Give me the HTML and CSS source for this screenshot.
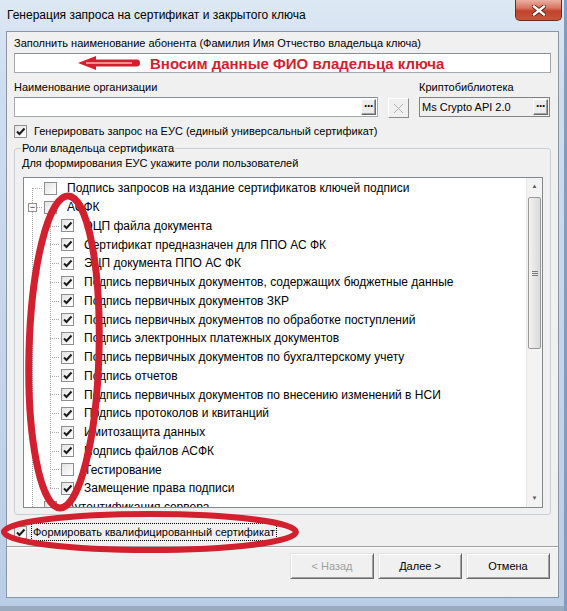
FILE: index.html
```html
<!DOCTYPE html>
<html lang="ru">
<head>
  <meta charset="UTF-8" />
  <title>Генерация запроса на сертификат и закрытого ключа</title>
  <link rel="stylesheet" href="styles.css">
</head>
<body>
  <div class="window">
    <div class="titlebar">
      <span class="title">Генерация запроса на сертификат и закрытого ключа</span>
      <div class="close">
        <svg width="14" height="11" viewBox="0 0 14 11">
          <path d="M2 1.5 L12 9.5 M12 1.5 L2 9.5" stroke="#5a1c12" stroke-width="4.2" stroke-linecap="square"/>
          <path d="M2 1.5 L12 9.5 M12 1.5 L2 9.5" stroke="#fff" stroke-width="2.4" stroke-linecap="square"/>
        </svg>
      </div>
    </div>

    <div class="client">
      <div class="label first">Заполнить наименование абонента (Фамилия Имя Отчество владельца ключа)</div>
      <div class="edit wide">
        <svg class="arrow" width="64" height="16" viewBox="0 0 64 16">
          <path d="M1 8 L19 1 L19 4.5 L60 4.5 Q63 4.5 63 8 Q63 11.5 60 11.5 L19 11.5 L19 15 Z" fill="#d3202e"/>
          <path d="M9 8 L55 8" stroke="#fff" stroke-width="1"/>
        </svg>
        <span class="note">Вносим данные ФИО владельца ключа</span>
      </div>

      <div class="org">
        <div class="label">Наименование организации</div>
        <div></div>
        <div class="label">Криптобиблиотека</div>
        <div class="edit">
          <span class="dots">···</span>
        </div>
        <div class="btn-x">
          <svg width="11" height="11" viewBox="0 0 11 11">
            <path d="M1 1 L10 10 M10 1 L1 10" stroke="#b4b4b4" stroke-width="1"/>
          </svg>
        </div>
        <div class="combo">
          <span>Ms Crypto API 2.0</span>
          <span class="dots">···</span>
        </div>
      </div>

      <div class="check-row eus">
        <span class="box on"><svg width="11" height="11" viewBox="0 0 11 11"><path d="M2 5.5 L4.5 8 L9.5 2.5" fill="none" stroke="#1b1b1b" stroke-width="2"/></svg></span>
        <span>Генерировать запрос на ЕУС (единый универсальный сертификат)</span>
      </div>

      <fieldset class="group">
        <legend>Роли владельца сертификата</legend>
        <p class="hint">Для формирования ЕУС укажите роли пользователей</p>
        <div class="tree">
          <div class="tree-list">
            <div class="row r0"><span class="box"></span><span>Подпись запросов на издание сертификатов ключей подписи</span></div>
            <div class="row r0"><span class="toggle">−</span><span class="box"></span><span>АСФК</span></div>
            <div class="children">
              <div class="row r1"><span class="box on"><svg width="11" height="11" viewBox="0 0 11 11"><path d="M2 5.5 L4.5 8 L9.5 2.5" fill="none" stroke="#1b1b1b" stroke-width="2"/></svg></span><span>ЭЦП файла документа</span></div>
              <div class="row r1"><span class="box on"><svg width="11" height="11" viewBox="0 0 11 11"><path d="M2 5.5 L4.5 8 L9.5 2.5" fill="none" stroke="#1b1b1b" stroke-width="2"/></svg></span><span>Сертификат предназначен для ППО АС ФК</span></div>
              <div class="row r1"><span class="box on"><svg width="11" height="11" viewBox="0 0 11 11"><path d="M2 5.5 L4.5 8 L9.5 2.5" fill="none" stroke="#1b1b1b" stroke-width="2"/></svg></span><span>ЭЦП документа ППО АС ФК</span></div>
              <div class="row r1"><span class="box on"><svg width="11" height="11" viewBox="0 0 11 11"><path d="M2 5.5 L4.5 8 L9.5 2.5" fill="none" stroke="#1b1b1b" stroke-width="2"/></svg></span><span>Подпись первичных документов, содержащих бюджетные данные</span></div>
              <div class="row r1"><span class="box on"><svg width="11" height="11" viewBox="0 0 11 11"><path d="M2 5.5 L4.5 8 L9.5 2.5" fill="none" stroke="#1b1b1b" stroke-width="2"/></svg></span><span>Подпись первичных документов ЗКР</span></div>
              <div class="row r1"><span class="box on"><svg width="11" height="11" viewBox="0 0 11 11"><path d="M2 5.5 L4.5 8 L9.5 2.5" fill="none" stroke="#1b1b1b" stroke-width="2"/></svg></span><span>Подпись первичных документов по обработке поступлений</span></div>
              <div class="row r1"><span class="box on"><svg width="11" height="11" viewBox="0 0 11 11"><path d="M2 5.5 L4.5 8 L9.5 2.5" fill="none" stroke="#1b1b1b" stroke-width="2"/></svg></span><span>Подпись электронных платежных документов</span></div>
              <div class="row r1"><span class="box on"><svg width="11" height="11" viewBox="0 0 11 11"><path d="M2 5.5 L4.5 8 L9.5 2.5" fill="none" stroke="#1b1b1b" stroke-width="2"/></svg></span><span>Подпись первичных документов по бухгалтерскому учету</span></div>
              <div class="row r1"><span class="box on"><svg width="11" height="11" viewBox="0 0 11 11"><path d="M2 5.5 L4.5 8 L9.5 2.5" fill="none" stroke="#1b1b1b" stroke-width="2"/></svg></span><span>Подпись отчетов</span></div>
              <div class="row r1"><span class="box on"><svg width="11" height="11" viewBox="0 0 11 11"><path d="M2 5.5 L4.5 8 L9.5 2.5" fill="none" stroke="#1b1b1b" stroke-width="2"/></svg></span><span>Подпись первичных документов по внесению изменений в НСИ</span></div>
              <div class="row r1"><span class="box on"><svg width="11" height="11" viewBox="0 0 11 11"><path d="M2 5.5 L4.5 8 L9.5 2.5" fill="none" stroke="#1b1b1b" stroke-width="2"/></svg></span><span>Подпись протоколов и квитанций</span></div>
              <div class="row r1"><span class="box on"><svg width="11" height="11" viewBox="0 0 11 11"><path d="M2 5.5 L4.5 8 L9.5 2.5" fill="none" stroke="#1b1b1b" stroke-width="2"/></svg></span><span>Имитозащита данных</span></div>
              <div class="row r1"><span class="box on"><svg width="11" height="11" viewBox="0 0 11 11"><path d="M2 5.5 L4.5 8 L9.5 2.5" fill="none" stroke="#1b1b1b" stroke-width="2"/></svg></span><span>Подпись файлов АСФК</span></div>
              <div class="row r1"><span class="box"></span><span>Тестирование</span></div>
              <div class="row r1"><span class="box on"><svg width="11" height="11" viewBox="0 0 11 11"><path d="M2 5.5 L4.5 8 L9.5 2.5" fill="none" stroke="#1b1b1b" stroke-width="2"/></svg></span><span>Замещение права подписи</span></div>
            </div>
            <div class="row r0"><span class="box"></span><span>Аутентификация сервера</span></div>
          </div>
          <div class="scrollbar">
            <div class="sb-arrow">▲</div>
            <div class="sb-track">
              <div class="sb-thumb"><span class="grip"></span></div>
            </div>
            <div class="sb-arrow">▼</div>
          </div>
        </div>
      </fieldset>

      <div class="check-row qual">
        <span class="box on"><svg width="11" height="11" viewBox="0 0 11 11"><path d="M2 5.5 L4.5 8 L9.5 2.5" fill="none" stroke="#1b1b1b" stroke-width="2"/></svg></span>
        <span class="focus">Формировать квалифицированный сертификат</span>
      </div>

      <div class="separator"></div>

      <div class="buttons">
        <div class="btn disabled">&lt; Назад</div>
        <div class="btn">Далее &gt;</div>
        <div class="btn">Отмена</div>
      </div>
    </div>
  </div>

  <!-- hand-drawn red marks over the dialog -->
  <svg class="marks" width="567" height="611" viewBox="0 0 567 611">
    <ellipse cx="64" cy="352" rx="35" ry="156" transform="rotate(1.5 64 352)" fill="none" stroke="#d3202e" stroke-width="7"/>
    <ellipse cx="150" cy="532" rx="146" ry="18" fill="none" stroke="#d3202e" stroke-width="6"/>
  </svg>
</body>
</html>
```

FILE: styles.css
```css
* { box-sizing: border-box; }
html, body { margin: 0; height: 100%; }
body {
  width: 567px; height: 611px; overflow: hidden;
  position: relative;
  font: 11px "Liberation Sans", Arial, sans-serif;
  color: #000;
  background: #a9bfdb;
}
.window {
  height: 611px;
  display: flex; flex-direction: column;
  padding: 0 8px 13px 6px;
  background: linear-gradient(to bottom, #dde8f4 0, #cfddef 80px, #c2d4ea 400px, #b9cde6 100%);
  box-shadow: inset -3px 0 0 #7f9dc4, inset 0 -5px 0 #9aabbf;
}
.titlebar { height: 31px; display: flex; align-items: flex-start; }
.title {
  margin: 8px 0 0 1px;
  font-size: 12px; line-height: 14px;
}
.close {
  margin-left: auto; margin-right: -3px;
  width: 47px; height: 21px;
  border: 1px solid #6e2a1f; border-top: none;
  border-radius: 0 0 5px 5px;
  background: linear-gradient(to bottom, #eab0a2 0, #d87560 40%, #c0432a 55%, #c9553c 100%);
  display: flex; align-items: center; justify-content: center;
}
.client {
  flex: 1;
  display: flex; flex-direction: column;
  background: #f0f0f0;
  border: 1px solid #8796ab;
  padding: 0 7px;
}
.label { line-height: 14px; white-space: nowrap; }
.label.first { margin-top: 4px; }

.edit {
  height: 20px; background: #fff;
  border: 1px solid #a5a9b0; border-top-color: #8a8e96;
  display: flex; align-items: center; justify-content: flex-end;
}
.edit.wide { margin-top: 3px; justify-content: flex-start; }
.arrow { margin-left: 62px; }
.note {
  margin-left: 9px;
  color: #d3202e; font-weight: bold; font-size: 15px;
}
.dots {
  width: 15px; height: 16px; margin-right: 1px;
  background: #ececec;
  border: 1px solid; border-color: #fff #6a6a6a #6a6a6a #fff;
  box-shadow: inset -1px -1px 0 #a0a0a0;
  font-weight: bold; font-size: 12px; line-height: 12px;
  text-align: center; letter-spacing: -1px;
}

.org {
  margin-top: 7px;
  display: grid;
  grid-template-columns: 364px 21px 131px;
  column-gap: 10px;
  row-gap: 3px;
  align-items: start;
}
.org .label:last-of-type { grid-column: 3; }
.btn-x {
  margin-top: 1px; height: 20px;
  background: #f0f0f0;
  border: 1px solid; border-color: #fff #8c8c8c #8c8c8c #fff;
  display: flex; align-items: center; justify-content: center;
}
.combo {
  height: 20px;
  background: #f0f0f0;
  border: 1px solid #828282;
  display: flex; align-items: center; justify-content: space-between;
  padding-left: 2px;
}

.check-row { display: flex; align-items: center; line-height: 14px; }
.check-row.eus { margin-top: 6px; gap: 7px; }
.box {
  flex: none;
  width: 13px; height: 13px;
  border: 1px solid #8e8f8f;
  background: linear-gradient(135deg, #e3e3e3, #fff);
  display: inline-flex; align-items: center; justify-content: center;
}

.group {
  margin: 3px 0 0; min-width: 0;
  padding: 0 7px 6px 6px;
  border: 1px solid #c9cfd6; border-radius: 3px;
}
.group legend { padding: 0 1px; line-height: 14px; }
.hint { margin: 1px 0 0 1px; line-height: 14px; }

.tree {
  margin: 7px 0 0 2px;
  height: 331px;
  display: flex;
  background: #fff;
  border: 1px solid #828790;
  font-size: 12px;
}
.tree-list {
  flex: 1; overflow: hidden;
  padding-top: 1px;
  background: repeating-linear-gradient(to bottom, #a7a7a7 0 1px, transparent 1px 2px) no-repeat 8px 10px / 1px 100%;
}
.row {
  position: relative;
  height: 18.75px;
  display: flex; align-items: center;
  white-space: nowrap;
}
.row .box { margin-right: 10px; }
.r0 { padding-left: 20px; }
.r1 { padding-left: 37px; }
.row::before {
  content: ""; position: absolute; top: 9px; height: 1px;
  background: repeating-linear-gradient(to right, #a7a7a7 0 1px, transparent 1px 2px);
}
.r0::before { left: 9px; width: 10px; }
.r1::before { left: 26px; width: 10px; }
.children {
  background: repeating-linear-gradient(to bottom, #a7a7a7 0 1px, transparent 1px 2px) no-repeat 26px 0 / 1px calc(100% - 9px);
}
.toggle {
  position: absolute; left: 4px; top: 5px;
  width: 9px; height: 9px;
  background: #fff; border: 1px solid #919191;
  font-size: 9px; line-height: 6px; text-align: center;
}

.scrollbar {
  width: 16px;
  display: flex; flex-direction: column;
  background: #f3f3f3;
  border-left: 1px solid #e6e6e6;
}
.sb-arrow {
  height: 17px; text-align: center;
  font-size: 6px; line-height: 17px; color: #5a5a5a;
}
.sb-track { flex: 1; padding: 2px 1px 0; }
.sb-thumb {
  height: 152px;
  border: 1px solid #9a9a9a; border-radius: 2px;
  background: linear-gradient(to right, #f3f3f3, #e6e6e6 50%, #d9d9d9);
  display: flex; align-items: center; justify-content: center;
}
.grip {
  width: 6px; height: 5px;
  background: repeating-linear-gradient(to bottom, #7b7b7b 0 1px, transparent 1px 2px);
}

.check-row.qual { margin-top: 8px; gap: 4px; }
.focus { padding: 1px 1px; border: 1px dotted #000; }

.separator {
  margin: 5px -7px 0;
  height: 2px;
  border-top: 1px solid #a0a0a0; border-bottom: 1px solid #fff;
}
.buttons {
  margin-top: 5px; margin-right: 1px;
  display: flex; justify-content: flex-end; gap: 4px;
}
.btn {
  width: 84px; height: 26px;
  display: flex; align-items: center; justify-content: center;
  background: #f0f0f0;
  border: 1px solid; border-color: #e3e3e3 #696969 #696969 #e3e3e3;
  box-shadow: inset 1px 1px 0 #fff, inset -1px -1px 0 #a0a0a0;
}
.btn.disabled { color: #a0a0a0; }

.marks { position: absolute; top: 0; left: 0; pointer-events: none; }
```
